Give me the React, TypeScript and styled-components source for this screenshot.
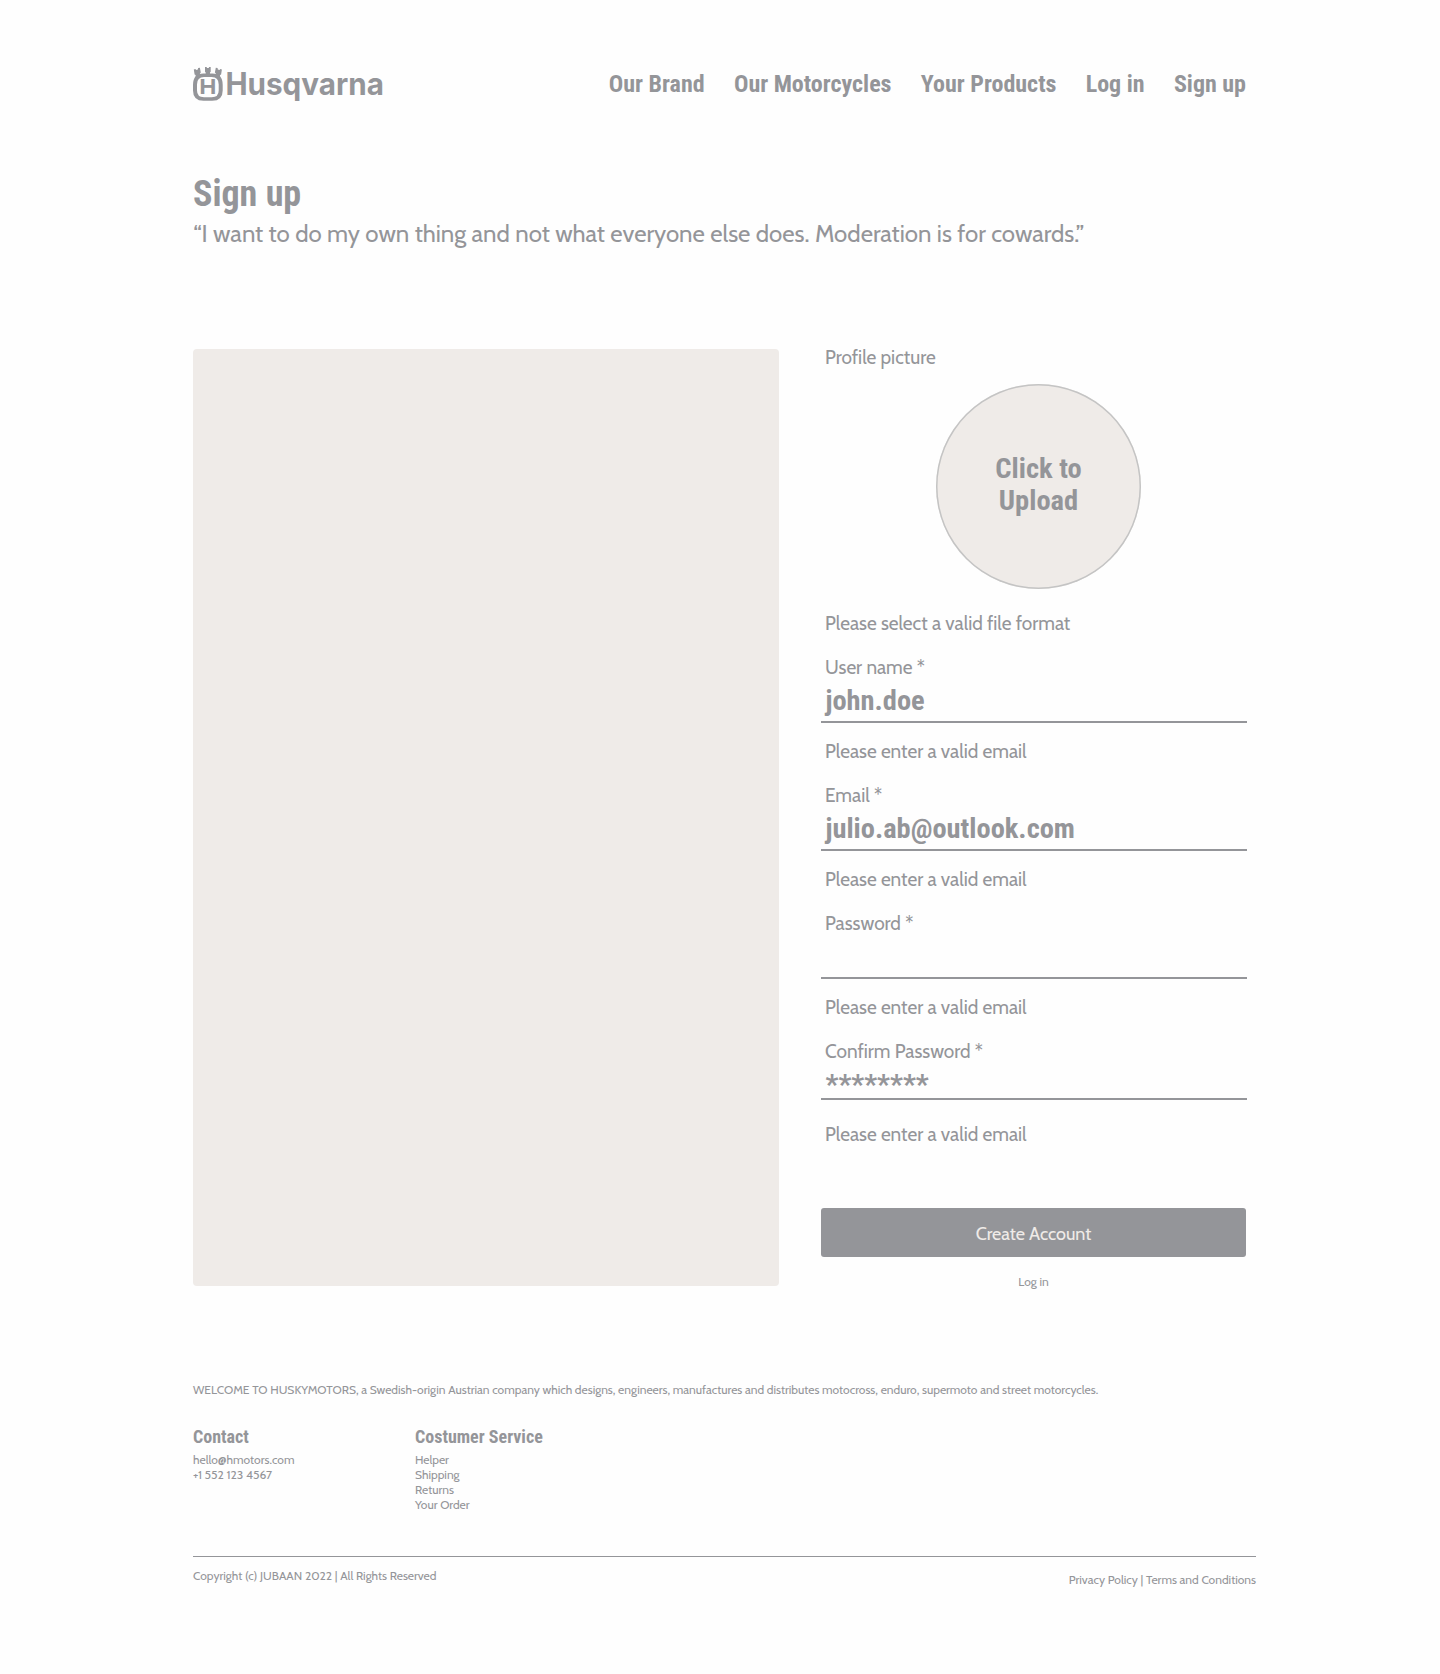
import React from "react";
import styled, { createGlobalStyle } from "styled-components";

const GREY = "#949599";
const SAND = "#efebe8";
const HEADING = `"Roboto Condensed", Roboto, sans-serif`;
const BODY = `Cabin, Lato, sans-serif`;

const GlobalStyle = createGlobalStyle`
  *, *::before, *::after { box-sizing: border-box; }
  body { margin: 0; background: #fefefe; color: ${GREY}; font-family: ${BODY}; }
`;

const Page = styled.div`
  width: 1063px;
  min-height: 1674px;
  margin-left: 193px;
`;

const Header = styled.header`
  display: flex;
  align-items: center;
  justify-content: space-between;
  height: 168px;
  padding-right: 10px;
`;

const Logo = styled.svg`
  display: block;
  width: 200px;
  height: 40px;
  overflow: visible;
  fill: ${GREY};
`;

const Wordmark = styled.text`
  font: 700 31px Inter, Arial, sans-serif;
`;

const Monogram = styled.text`
  font: 700 21.5px "Liberation Sans", Arial, sans-serif;
`;

const Nav = styled.nav`
  display: flex;
  gap: 29.3px;
`;

const NavLink = styled.a`
  font: 700 24px/28px ${HEADING};
  white-space: nowrap;
`;

const Title = styled.h1`
  margin: 5px 0 4px;
  font: 700 36px/42px ${HEADING};
`;

const Quote = styled.p`
  margin: 0;
  font-size: 24px;
  line-height: 30px;
`;

const Main = styled.main`
  display: grid;
  grid-template-columns: 586px 435px;
  column-gap: 42px;
  margin-top: 100px;
`;

const Cover = styled.div`
  height: 937px;
  border-radius: 4px;
  background: ${SAND};
`;

const Form = styled.form`
  display: flex;
  flex-direction: column;
  height: 937px;
  margin-top: -3px;
`;

const Caption = styled.span`
  display: block;
  padding-left: 4px;
  font-size: 19px;
  line-height: 23px;
`;

const Upload = styled.div`
  display: flex;
  flex: none;
  align-items: center;
  align-self: center;
  justify-content: center;
  width: 205px;
  height: 205px;
  margin: 15px 0 23px;
  padding-bottom: 3px;
  border-radius: 50%;
  box-shadow: inset 0 0 0 1.5px #c4c4c4;
  background: ${SAND};
  text-align: center;
  font: 700 28.5px/32px ${HEADING};
`;

const Fields = styled.div`
  display: flex;
  flex-direction: column;
  gap: 21px;
  width: 426px;
  margin-top: 21px;
`;

const Value = styled.div<{ $short?: boolean }>`
  height: ${(p) => (p.$short ? 37 : 44)}px;
  margin-bottom: ${(p) => (p.$short ? 23 : 17)}px;
  padding: 5px 0 0 4.5px;
  border-bottom: 2px solid ${GREY};
  font: 700 28.45px/33px ${HEADING};
`;

const Submit = styled.button`
  flex: none;
  width: 425px;
  height: 49px;
  margin: 62px 0 17px;
  padding: 3px 0 0;
  border: 0;
  border-radius: 3px;
  background: ${GREY};
  color: ${SAND};
  font: 400 18px/23px ${BODY};
`;

const LoginLink = styled.a`
  width: 425px;
  text-align: center;
  font-size: 12px;
  line-height: 15px;
`;

const Footer = styled.footer`
  margin-top: 96px;
  font-size: 12px;
  line-height: 15px;
`;

const Columns = styled.div`
  display: grid;
  grid-template-columns: 222px 222px;
  height: 130px;
  margin-top: 29px;
`;

const Column = styled.div`
  display: flex;
  flex-direction: column;
`;

const ColumnTitle = styled.h2`
  margin: 0 0 5px;
  font: 700 18px/21px ${HEADING};
`;

const Legal = styled.div`
  display: flex;
  justify-content: space-between;
  padding-top: 11px;
  border-top: 1px solid ${GREY};
`;

const Policies = styled.span`
  padding-top: 4px;
`;

const navigation = ["Our Brand", "Our Motorcycles", "Your Products", "Log in", "Sign up"];

const fields = [
  { label: "User name *", value: "john.doe" },
  { label: "Email *", value: "julio.ab@outlook.com" },
  { label: "Password *", value: "" },
  { label: "Confirm Password *", value: "********", short: true },
];

const columns = [
  { title: "Contact", items: ["hello@hmotors.com", "+1 552 123 4567"] },
  { title: "Costumer Service", items: ["Helper", "Shipping", "Returns", "Your Order"] },
];

export default function App() {
  return (
    <>
      <GlobalStyle />
      <Page>
        <Header>
          <Logo viewBox="0 -3 200 40" role="img" aria-label="Husqvarna">
            {/* Ring */}
            <path
              d="M10.5 6.6H19.2Q29.7 6.6 29.7 18V23.5Q29.7 33.8 19.2 33.8H10.5Q0 33.8 0 23.5V18Q0 6.6 10.5 6.6ZM11 10Q4 10 4 17.5V23.5Q4 30.2 11 30.2H18.7Q25.7 30.2 25.7 23.5V17.5Q25.7 10 18.7 10Z"
              fillRule="evenodd"
            />
            {/* Crown towers */}
            <path d="M.8 2.4 2.4 1.9 3.1 2.9 4.9 2.4 5.1 1.1 6.9.8 7.8 5.5 6.8 6.4 8.8 9 3 12 2.6 8 1.6 7.4Z" />
            <path d="M28.9 2.4 27.3 1.9 26.6 2.9 24.8 2.4 24.6 1.1 22.8.8 21.9 5.5 22.9 6.4 20.9 9 26.7 12 27.1 8 28.1 7.4Z" />
            <path d="M12 0H13.8V1H15.9V0H17.7V4.8L17 5.4V8H12.7V5.4L12 4.8Z" />
            <Monogram x="6.3" y="27" textLength="17.2" lengthAdjust="spacingAndGlyphs">H</Monogram>
            <Wordmark x="32.4" y="28.1" textLength="158.5" lengthAdjust="spacingAndGlyphs">Husqvarna</Wordmark>
          </Logo>
          <Nav>
            {navigation.map((item) => (
              <NavLink key={item}>{item}</NavLink>
            ))}
          </Nav>
        </Header>

        <Title>Sign up</Title>
        <Quote>“I want to do my own thing and not what everyone else does. Moderation is for cowards.”</Quote>

        <Main>
          <Cover />
          <Form>
            <Caption>Profile picture</Caption>
            <Upload>
              Click to
              <br />
              Upload
            </Upload>
            <Caption>Please select a valid file format</Caption>
            <Fields>
              {fields.map((field) => (
                <div key={field.label}>
                  <Caption>{field.label}</Caption>
                  <Value $short={field.short}>{field.value}</Value>
                  <Caption>Please enter a valid email</Caption>
                </div>
              ))}
            </Fields>
            <Submit type="button">Create Account</Submit>
            <LoginLink>Log in</LoginLink>
          </Form>
        </Main>

        <Footer>
          WELCOME TO HUSKYMOTORS, a Swedish-origin Austrian company which designs, engineers, manufactures and
          distributes motocross, enduro, supermoto and street motorcycles.
          <Columns>
            {columns.map((column) => (
              <Column key={column.title}>
                <ColumnTitle>{column.title}</ColumnTitle>
                {column.items.map((item) => (
                  <span key={item}>{item}</span>
                ))}
              </Column>
            ))}
          </Columns>
          <Legal>
            <span>Copyright (c) JUBAAN 2022 | All Rights Reserved</span>
            <Policies>Privacy Policy | Terms and Conditions</Policies>
          </Legal>
        </Footer>
      </Page>
    </>
  );
}
